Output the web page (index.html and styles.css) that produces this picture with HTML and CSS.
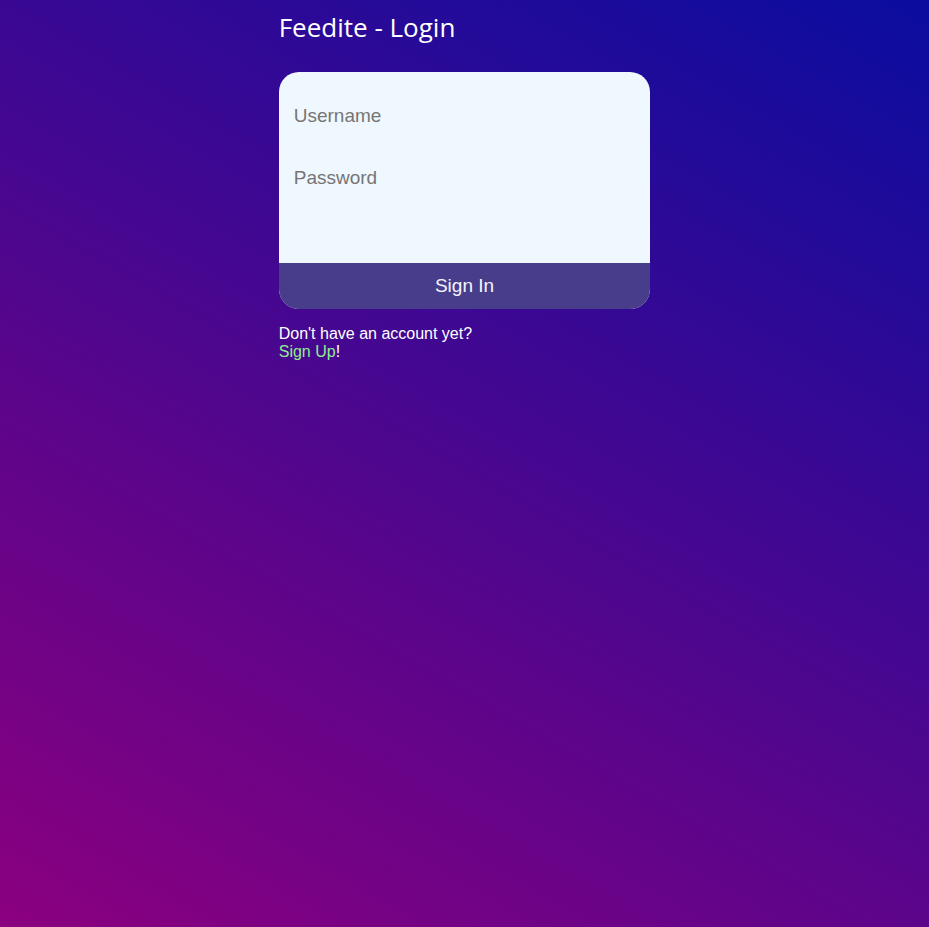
FILE: index.html
```html
<!DOCTYPE html>
<html lang="en">
<head>
<meta charset="utf-8">
<title>Feedite - Login</title>
<link rel="stylesheet" href="styles.css">
</head>
<body>
<main class="page">
  <h1 class="title">Feedite - Login</h1>
  <form class="card">
    <div class="fields">
      <input class="field" type="text" placeholder="Username">
      <input class="field" type="password" placeholder="Password">
    </div>
    <button class="submit" type="button">Sign In</button>
  </form>
  <p class="note">Don't have an account yet?<br><a class="link" href="#">Sign Up</a>!</p>
</main>
</body>
</html>
```

FILE: styles.css
```css
html, body {
  margin: 0;
  height: 100%;
}
body {
  background: linear-gradient(30deg, #8b007f, #0a0d9f);
  font-family: "Liberation Sans", Arial, sans-serif;
  color: #ffffff;
}
.page {
  width: 40%;
  margin: 0 auto;
}
.title {
  margin: 0;
  padding-top: 9px;
  height: 72px;
  box-sizing: border-box;
  font-family: "Open Sans", "Noto Sans", sans-serif;
  font-weight: 400;
  font-size: 26px;
  line-height: 36px;
  color: #ffffff;
}
.card {
  background: #f0f8ff;
  border-radius: 20px;
  overflow: hidden;
  display: flex;
  flex-direction: column;
}
.fields {
  display: flex;
  flex-direction: column;
  gap: 16px;
  padding: 21px 0 62px;
}
.field {
  height: 46px;
  border: none;
  background: transparent;
  padding: 0 15px;
  font-family: "Liberation Sans", Arial, sans-serif;
  font-size: 19px;
  color: #333;
  outline: none;
}
.field::placeholder {
  color: #757575;
}
.submit {
  height: 46px;
  border: none;
  background: #483d8b;
  color: #f4f4ff;
  font-family: "Liberation Sans", Arial, sans-serif;
  font-size: 19px;
  cursor: pointer;
}
.note {
  margin: 16px 0 0;
  font-size: 16px;
  line-height: 18px;
}
.link {
  color: #90ee90;
  text-decoration: none;
}
```
